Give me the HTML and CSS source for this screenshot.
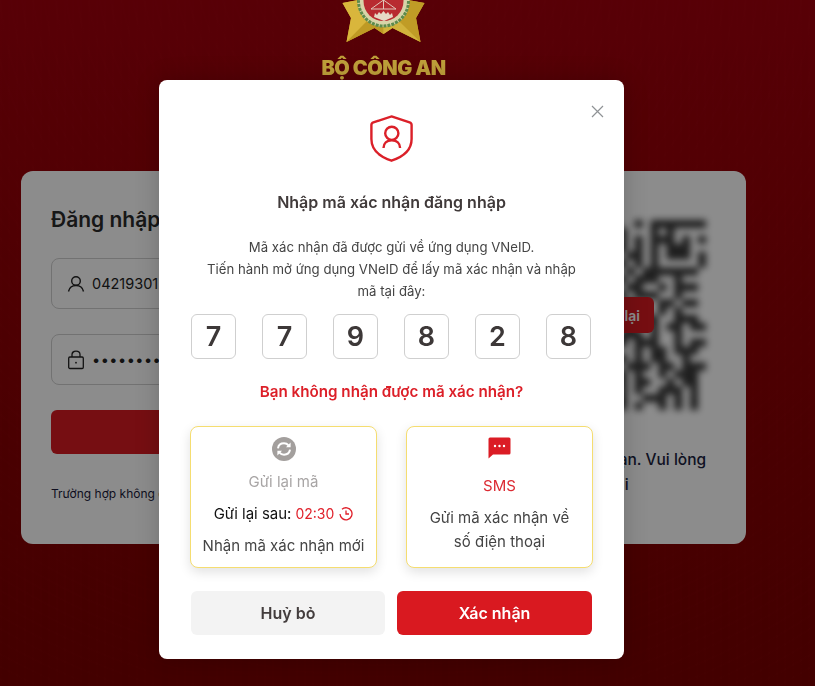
FILE: index.html
```html
<!DOCTYPE html>
<html lang="en">
<head>
  <meta charset="UTF-8" />
  <meta name="viewport" content="width=device-width, initial-scale=1.0">
  <title>Bộ Công An - Đăng nhập</title>
  <link rel="stylesheet" href="styles.css">
</head>
<body>
  <div class="page">
    <header class="brand">
      <svg class="brand-logo" width="91" height="44" viewBox="0 0 91 44">
        <polygon points="4.500,3 13,18 8.500,42 36.500,28 45.500,34 54.500,28 82.500,42 78,18 86.500,3 70,0 20,0" fill="#cda82c" />
        <polygon points="4.500,3 13,18 8.500,42 30,20 20,0" fill="#d9b63c" />
        <polygon points="8.500,42 36.500,28 45.500,34 45.500,18 30,20" fill="#bf9a24" />
        <polygon points="82.500,42 54.500,28 45.500,34 45.500,18 60,20" fill="#d2b33c" />
        <polygon points="86.500,3 78,18 82.500,42 60,20 70,0" fill="#c09c26" />
        <circle cx="45.500" cy="1" r="26" fill="#d8d4a8" />
        <circle cx="45.500" cy="1" r="25" fill="none" stroke="#5d8b4c" stroke-width="3" stroke-dasharray="3 1" />
        <circle cx="45.500" cy="1" r="20" fill="#b82b30" />
        <path d="M45.500 0L58 9H33zM45.500 0v9M38 -2l15 0" fill="none" stroke="#e0c8ba" stroke-width="1" />
        <path d="M36 17l1-4 2 2 2-3 2 2 2.500-3 2.500 3 2-2 2 3 2-2 1 4-9 4z" fill="#e6dac6" />
      </svg>
      <div class="brand-name">BỘ CÔNG AN</div>
    </header>

    <main class="login-card">
      <section class="login-form">
        <h2>Đăng nhập</h2>
        <div class="field">
          <svg width="18" height="18" viewBox="0 0 18 18" fill="none" stroke="#222" stroke-width="1.4">
            <circle cx="9" cy="6" r="4.300" />
            <path d="M1.500 16.500c.8-3.800 3.600-6 7.500-6s6.700 2.200 7.500 6" />
          </svg>
          <span>042193012345</span>
        </div>
        <div class="field">
          <svg width="18" height="20" viewBox="0 0 18 20" fill="none" stroke="#222" stroke-width="1.300">
            <rect x="1.700" y="7" width="14.600" height="11.500" rx="1.200" />
            <path d="M5 7V4.600C5 2.600 6.800 1.200 9 1.200s4 1.400 4 3.400V7" />
            <circle cx="9" cy="12.700" r=".9" fill="#222" stroke="none" />
          </svg>
          <span class="dots">••••••••••••</span>
        </div>
        <button class="login-btn">Đăng nhập</button>
        <p class="login-note">Trường hợp không đăng nhập được</p>
      </section>
      <section class="login-qr">
        <div class="qr-box">
          <svg class="qr-code" width="190" height="190" viewBox="0 0 24 24" fill="none" stroke="#111" stroke-width="1">
            <path d="M0 .5H24" stroke-dasharray="7 2 1 1 2 2 1 1 7" />
            <path d="M0 1.500H24" stroke-dasharray="1 5 1 1 3 1 2 3 1 1 1 4" />
            <path d="M0 2.500H24" stroke-dasharray="1 1 3 1 1 3 1 2 1 1 1 1 3 1 1" />
            <path d="M0 3.500H24" stroke-dasharray="1 1 3 1 1 1 2 1 3 1 1 1 1 1 3 2" />
            <path d="M0 4.500H24" stroke-dasharray="1 1 3 1 1 2 1 2 1 1 2 1 1 1 3 1 1" />
            <path d="M0 5.500H24" stroke-dasharray="1 5 1 1 3 2 1 1 1 1 1 5 1" />
            <path d="M0 6.500H24" stroke-dasharray="7 1 1 1 1 1 1 1 1 1 7" />
            <path d="M0 7.500H24" stroke-dasharray="0 9 2 2 1 1 3 2 1 3" />
            <path d="M0 8.500H24" stroke-dasharray="2 1 3 2 1 1 3 1 2 2 1 1 3 1" />
            <path d="M0 9.500H24" stroke-dasharray="1 3 2 1 1 2 1 1 2 1 3 2 1 3" />
            <path d="M0 10.500H24" stroke-dasharray="3 1 1 2 3 1 1 2 1 3 2 1 2 1" />
            <path d="M0 11.500H24" stroke-dasharray="1 2 2 3 1 1 2 1 3 2 1 1 1 3" />
            <path d="M0 12.500H24" stroke-dasharray="2 2 1 1 1 3 3 1 1 1 2 2 3 1" />
            <path d="M0 13.500H24" stroke-dasharray="1 1 3 2 2 1 1 3 1 2 1 1 2 1 2" />
            <path d="M0 14.500H24" stroke-dasharray="3 2 1 1 1 1 2 2 3 1 1 2 1 3" />
            <path d="M0 15.500H24" stroke-dasharray="1 1 1 3 2 2 1 1 2 1 3 2 1 1 2" />
            <path d="M0 16.500H24" stroke-dasharray="7 1 2 1 1 3 1 1 2 1 3 1" />
            <path d="M0 17.500H24" stroke-dasharray="0 8 1 2 3 1 1 1 2 2 1 2" />
            <path d="M0 18.500H24" stroke-dasharray="7 2 2 1 1 1 3 1 2 1 3" />
            <path d="M0 19.500H24" stroke-dasharray="1 5 1 1 1 3 2 1 1 2 1 1 3 2" />
            <path d="M0 20.500H24" stroke-dasharray="1 1 3 1 1 2 1 1 3 1 2 2 1 1 2 2" />
            <path d="M0 21.500H24" stroke-dasharray="1 1 3 1 1 1 3 2 1 1 1 2 3 1 1 1" />
            <path d="M0 22.500H24" stroke-dasharray="1 1 3 1 1 3 1 1 2 2 3 1 1 1 1 1" />
            <path d="M0 23.500H24" stroke-dasharray="7 1 1 2 3 1 1 2 1 1 1 1 1 1 1" />
          </svg>
          <button class="reload-btn">Tải lại</button>
        </div>
        <p class="qr-note">Mã QR đã hết hạn. Vui lòng<br>thử lại</p>
      </section>
    </main>
  </div>

  <div class="backdrop"></div>

  <div class="modal">
    <button class="modal-close" aria-label="close">
      <svg width="13" height="13" viewBox="0 0 13 13" stroke="#8f9295" stroke-width="1.200">
        <path d="M1 1l11 11M12 1L1 12" />
      </svg>
    </button>

    <svg class="modal-icon" width="43" height="47" viewBox="0 0 43 47" fill="none" stroke="#db2029" stroke-width="2.400">
      <path d="M21.500 1.400L39.600 7.400c1.200.4 2 1.400 2 2.700V24c0 10.800-8.400 17.800-20.100 21.700C9.800 41.800 1.400 34.800 1.400 24V10.100c0-1.300.8-2.300 2-2.700z" />
      <circle cx="21.800" cy="18.300" r="6.600" />
      <path d="M13.500 33c0-4.800 3.400-7.800 8.300-7.800s8.300 3 8.300 7.800" />
    </svg>

    <h3 class="modal-title">Nhập mã xác nhận đăng nhập</h3>
    <p class="modal-desc">
      Mã xác nhận đã được gửi về ứng dụng VNeID.<br>
      Tiến hành mở ứng dụng VNeID để lấy mã xác nhận và nhập mã tại đây:
    </p>

    <div class="otp-row">
      <div class="otp-cell">7</div>
      <div class="otp-cell">7</div>
      <div class="otp-cell">9</div>
      <div class="otp-cell">8</div>
      <div class="otp-cell">2</div>
      <div class="otp-cell">8</div>
    </div>

    <p class="modal-help">Bạn không nhận được mã xác nhận?</p>

    <div class="option-row">
      <div class="option-card">
        <svg class="option-icon" width="24" height="24" viewBox="0 0 24 24">
          <circle cx="12" cy="12" r="12" fill="#a39f9d" />
          <path d="M6 11.300c.4-3 2.900-5 6-5 1.900 0 3.500.8 4.500 2" fill="none" stroke="#fff" stroke-width="2" />
          <path d="M18.600 5.600v4.600H14z" fill="#fff" />
          <path d="M18 12.700c-.4 3-2.900 5-6 5-1.900 0-3.500-.8-4.500-2" fill="none" stroke="#fff" stroke-width="2" />
          <path d="M5.400 18.400v-4.600H10z" fill="#fff" />
        </svg>
        <div class="option-name is-muted">Gửi lại mã</div>
        <div class="option-timer">
          Gửi lại sau: <span class="timer-value">02:30</span>
          <svg class="timer-icon" width="14" height="14" viewBox="0 0 14 14" fill="none" stroke="#e0202a" stroke-width="1.300">
            <path d="M3 2.300A6 6 0 1 1 1 7" />
            <path d="M7 3.400v3.600h3" />
          </svg>
        </div>
        <div class="option-text">Nhận mã xác nhận mới</div>
      </div>
      <div class="option-card">
        <svg class="option-icon" width="23" height="22" viewBox="0 0 23 22">
          <path d="M2 .5h19a1.500 1.500 0 0 1 1.500 1.500v14a1.500 1.500 0 0 1-1.500 1.500H5L.5 21.500V2A1.500 1.500 0 0 1 2 .5z" fill="#db1c25" />
          <circle cx="7" cy="9" r="1.200" fill="#fff" />
          <circle cx="11.500" cy="9" r="1.200" fill="#fff" />
          <circle cx="16" cy="9" r="1.200" fill="#fff" />
        </svg>
        <div class="option-name is-red">SMS</div>
        <div class="option-text">Gửi mã xác nhận về<br>số điện thoại</div>
      </div>
    </div>

    <div class="modal-actions">
      <button class="btn btn-cancel">Huỷ bỏ</button>
      <button class="btn btn-confirm">Xác nhận</button>
    </div>
  </div>
</body>
</html>
```

FILE: styles.css
```css
* {
  box-sizing: border-box;
}

html, body {
  height: 100%;
}

body {
  margin: 0;
  overflow: hidden;
  font-family: Inter, "Noto Sans", sans-serif;
  color: #222;
  background:
    repeating-radial-gradient(circle at 384px -40px, rgba(255, 90, 90, 0.012) 0 2px, transparent 2px 11px),
    repeating-linear-gradient(90deg, rgba(255, 70, 70, 0.015) 0 2px, transparent 2px 8px),
    linear-gradient(180deg, #a0000c 0%, #900005 40%, #7a0000 100%);
}

.page {
  width: 767px;
  padding: 0 21px;
}

.brand {
  position: relative;
  z-index: 2;
  height: 171px;
  display: flex;
  flex-direction: column;
  align-items: center;
}

.brand-logo {
  display: block;
}

.brand-name {
  margin-top: 13px;
  font-size: 20px;
  line-height: 22px;
  font-weight: 900;
  letter-spacing: -0.5px;
  color: #bfa03a;
}

.login-card {
  height: 373px;
  display: flex;
  background-color: #fff;
  border-radius: 12px;
}

.login-form {
  width: 400px;
  padding: 36px 30px 0;
}

.login-form h2 {
  margin: 0 0 25px;
  font-size: 21px;
  line-height: 26px;
  font-weight: 600;
  color: #2b2b2b;
}

.field {
  height: 51px;
  margin-bottom: 25px;
  padding: 0 15px;
  display: flex;
  align-items: center;
  gap: 7px;
  border: 1px solid #d0d0d0;
  border-radius: 8px;
  font-size: 14.500px;
}

.dots {
  letter-spacing: 0.5px;
}

.login-btn {
  display: block;
  width: 100%;
  height: 44px;
  border: none;
  border-radius: 6px;
  background-color: #d71a21;
  color: #fff;
}

.login-note {
  margin: 32px 0 0;
  font-size: 12px;
  line-height: 16px;
  color: #1a1a3a;
}

.login-qr {
  flex: 1;
  padding: 49px 40px 0 95px;
}

.qr-box {
  position: relative;
  width: 190px;
  height: 190px;
}

.qr-code {
  display: block;
  opacity: 0.85;
  filter: blur(3.500px);
}

.reload-btn {
  position: absolute;
  top: 77px;
  left: 50px;
  width: 88px;
  height: 36px;
  padding: 0 14px 0 0;
  border: none;
  border-radius: 6px;
  text-align: right;
  background-color: #d71a21;
  color: #fff;
  font-family: inherit;
  font-size: 14px;
  font-weight: 600;
}

.qr-note {
  margin: 37px -10px 0 -20px;
  font-size: 15.500px;
  line-height: 25px;
  font-weight: 500;
  text-align: center;
  color: #1b2340;
}

.backdrop {
  position: fixed;
  inset: 0;
  z-index: 1;
  background-color: rgba(0, 0, 0, 0.45);
}

.modal {
  position: fixed;
  top: 80px;
  left: 159px;
  z-index: 3;
  width: 465px;
  height: 579px;
  padding: 35px 32px 0;
  display: flex;
  flex-direction: column;
  align-items: center;
  background-color: #fff;
  border-radius: 8px;
  box-shadow: 0 0 24px rgba(0, 0, 0, 0.2);
}

.modal-close {
  position: absolute;
  top: 25px;
  right: 20px;
  padding: 0;
  display: flex;
  border: none;
  background: none;
}

.modal-icon {
  display: block;
  flex: none;
}

.modal-title {
  margin: 29px 0 0;
  font-size: 16px;
  line-height: 22px;
  font-weight: 600;
  color: #403a3a;
}

.modal-desc {
  margin: 23px 0 0;
  width: 385px;
  font-size: 13.200px;
  line-height: 22px;
  text-align: center;
  color: #444;
}

.otp-row {
  width: 100%;
  margin-top: 12px;
  display: flex;
  gap: 26px;
}

.otp-cell {
  width: 45px;
  height: 45px;
  display: flex;
  align-items: center;
  justify-content: center;
  border: 1px solid #cfcfcf;
  border-radius: 6px;
  font-size: 27px;
  font-weight: 600;
  color: #3d3838;
}

.modal-help {
  margin: 22px 0 0;
  font-size: 15.200px;
  line-height: 22px;
  font-weight: 600;
  color: #dc1f28;
}

.option-row {
  width: 403px;
  margin-top: 23px;
  display: grid;
  grid-template-columns: 187px 187px;
  justify-content: space-between;
}

.option-card {
  height: 142px;
  padding-top: 10px;
  display: flex;
  flex-direction: column;
  align-items: center;
  text-align: center;
  background-color: #fff;
  border: 1px solid #f5dd70;
  border-radius: 8px;
  box-shadow: 0 4px 12px rgba(0, 0, 0, 0.12);
  font-size: 15px;
  line-height: 24px;
  color: #444;
}

.option-icon {
  display: block;
  flex: none;
}

.option-name {
  margin-top: 9px;
}

.option-name.is-muted {
  color: #a8a5a5;
}

.option-name.is-red {
  margin-top: 15px;
  color: #dc2a32;
}

.option-timer {
  margin-top: 8px;
  display: flex;
  align-items: center;
  gap: 4px;
  color: #111;
}

.timer-value {
  font-size: 14px;
  color: #e0202a;
}

.timer-icon {
  margin-left: 1px;
}

.option-text {
  margin-top: 8px;
}

.modal-actions {
  width: 100%;
  margin-top: 23px;
  display: grid;
  grid-template-columns: 194px 195px;
  justify-content: space-between;
}

.btn {
  height: 44px;
  border: none;
  border-radius: 6px;
  font-family: inherit;
  font-size: 16px;
  font-weight: 600;
}

.btn-cancel {
  background-color: #f3f3f3;
  color: #433d3d;
}

.btn-confirm {
  background-color: #d91920;
  color: #fff;
}
```
